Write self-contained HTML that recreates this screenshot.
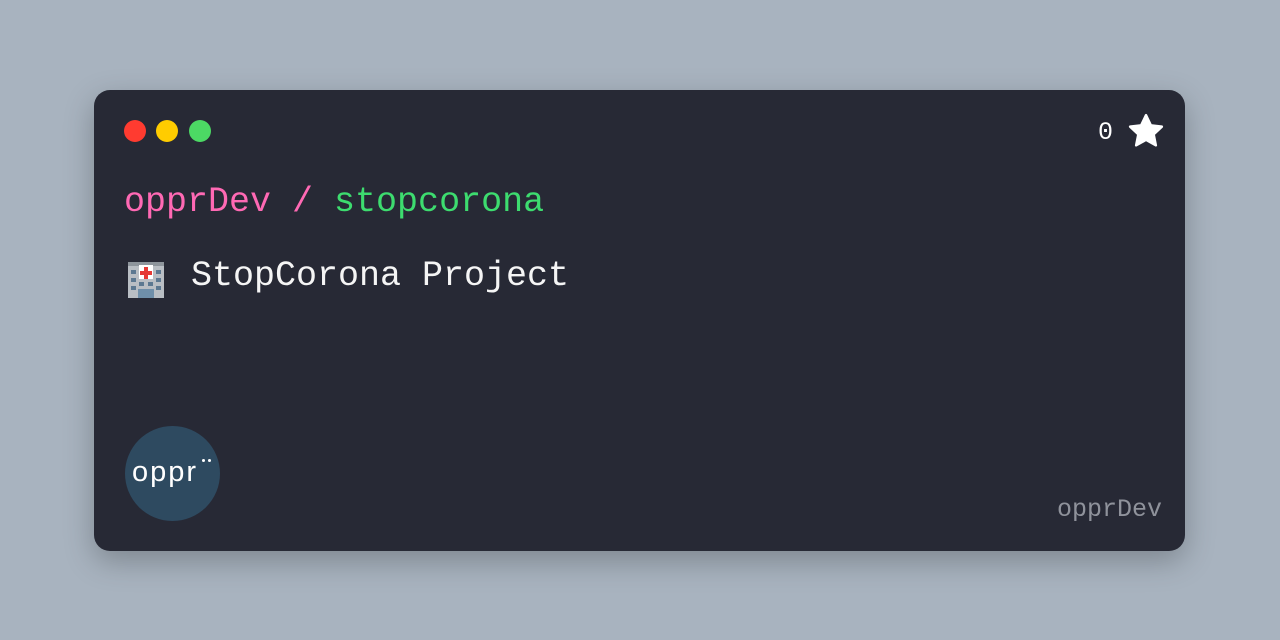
<!DOCTYPE html>
<html><head><meta charset="utf-8"><style>
html,body{margin:0;padding:0;width:1280px;height:640px;background:#a8b3bf;overflow:hidden}
.card{position:absolute;left:94px;top:90px;width:1091px;height:461px;background:#272935;border-radius:16px;box-shadow:0 10px 30px rgba(0,0,0,0.25)}
.dot{position:absolute;top:120px;width:22px;height:22px;border-radius:50%}
.t{position:absolute;font-family:"Liberation Mono",monospace;white-space:pre;line-height:1}
</style></head><body>
<div class="card"></div>
<div class="dot" style="left:124px;background:#ff3b30"></div>
<div class="dot" style="left:156px;background:#ffcc00"></div>
<div class="dot" style="left:189px;background:#4cd964"></div>
<div class="t" style="left:1098px;top:120px;font-size:25px;color:#fff">0</div>
<svg style="position:absolute;left:1126px;top:111px" width="40" height="40" viewBox="0 0 24 24"><path fill="#fff" stroke="#fff" stroke-width="1.5" stroke-linejoin="round" d="M12 2.5l2.9 6.1 6.6.8-4.9 4.6 1.3 6.6L12 17.3l-5.9 3.3 1.3-6.6-4.9-4.6 6.6-.8z"/></svg>
<div class="t" style="left:124px;top:185px;font-size:35px"><span style="color:#ff69b4">opprDev / </span><span style="color:#3ddc6f">stopcorona</span></div>
<svg style="position:absolute;left:126px;top:258px" width="40" height="40" viewBox="0 0 40 40">
<rect x="2" y="4" width="36" height="36" fill="#b9bec4"/><rect x="2" y="4" width="36" height="4" fill="#8e959c"/>
<rect x="13" y="7" width="14" height="14" fill="#fff"/><path d="M18 9h4v4h4v4h-4v4h-4v-4h-4v-4h4z" fill="#e53935"/>
<g fill="#5c7891"><rect x="5" y="12" width="5" height="4"/><rect x="5" y="20" width="5" height="4"/><rect x="5" y="28" width="5" height="4"/><rect x="30" y="12" width="5" height="4"/><rect x="30" y="20" width="5" height="4"/><rect x="30" y="28" width="5" height="4"/><rect x="13" y="24" width="5" height="4"/><rect x="22" y="24" width="5" height="4"/></g>
<rect x="12" y="31" width="16" height="9" fill="#6f8faa"/></svg>
<div class="t" style="left:191px;top:259px;font-size:35px;color:#f5f5f5">StopCorona Project</div>
<div style="position:absolute;left:125px;top:426px;width:95px;height:95px;border-radius:50%;background:#2e4a60"></div>
<div class="t" style="left:132px;top:458px;font-size:29px;color:#fff;font-family:'Liberation Sans',sans-serif;letter-spacing:2px">oppr</div>
<div style="position:absolute;left:202px;top:459px;width:3px;height:3px;border-radius:50%;background:#fff"></div>
<div style="position:absolute;left:208px;top:459px;width:3px;height:3px;border-radius:50%;background:#fff"></div>
<div class="t" style="left:1057px;top:497px;font-size:25px;color:#8f929b">opprDev</div>
</body></html>
